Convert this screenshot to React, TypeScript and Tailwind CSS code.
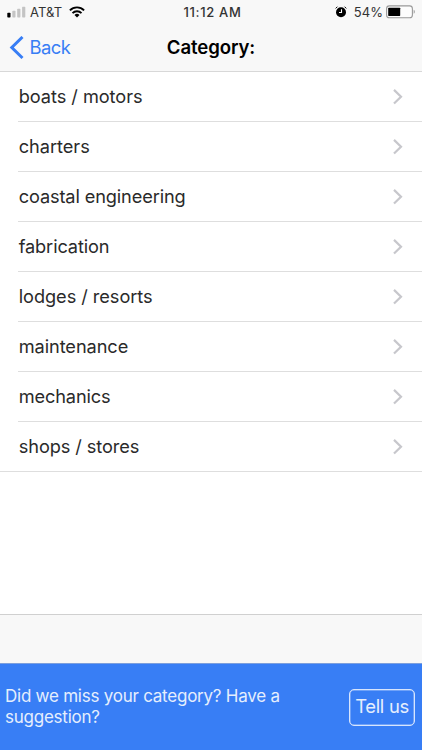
import React from 'react';

const CATEGORIES: { label: string; tracking: string }[] = [
    { label: 'boats / motors', tracking: 'tracking-[-0.05px]' },
    { label: 'charters', tracking: 'tracking-[-0.03px]' },
    { label: 'coastal engineering', tracking: 'tracking-[-0.13px]' },
    { label: 'fabrication', tracking: 'tracking-[-0.12px]' },
    { label: 'lodges / resorts', tracking: 'tracking-[-0.05px]' },
    { label: 'maintenance', tracking: 'tracking-[-0.08px]' },
    { label: 'mechanics', tracking: 'tracking-[-0.14px]' },
    { label: 'shops / stores', tracking: 'tracking-[-0.08px]' },
];

const SignalIcon: React.FC = () => (
    <svg width="19" height="12" viewBox="0 0 19 12">
        <rect x="0.3" y="6.7" width="3.2" height="4.8" rx="0.7" fill="#000" />
        <rect x="5.3" y="4.7" width="3.2" height="6.8" rx="0.7" fill="#c4c4c4" />
        <rect x="10.2" y="2.7" width="3.2" height="8.8" rx="0.7" fill="#c4c4c4" />
        <rect x="15.1" y="0.7" width="3.2" height="10.8" rx="0.7" fill="#c4c4c4" />
    </svg>
);

const WifiIcon: React.FC = () => (
    <svg width="16" height="12" viewBox="0 0 16 12" fill="none" stroke="#000" strokeWidth="1.9">
        <path d="M0.9 4.3a10 10 0 0 1 14.2 0" />
        <path d="M3.5 7.1a6.3 6.3 0 0 1 9 0" />
        <path d="M8 11.4 5.5 8.9a3.6 3.6 0 0 1 5 0Z" fill="#000" stroke="none" />
    </svg>
);

const AlarmIcon: React.FC = () => (
    <svg width="12" height="12" viewBox="0 0 12 12" fill="none">
        <circle cx="6" cy="6.2" r="5" fill="#000" />
        <path d="M0.7 2.4 2.4 0.7M11.3 2.4 9.6 0.7" stroke="#000" strokeWidth="1" />
        <path d="M6.5 3.3v3.2H4" stroke="#fff" strokeWidth="1.1" />
    </svg>
);

const BatteryIcon: React.FC = () => (
    <svg width="30" height="14" viewBox="0 0 30 14">
        <rect x="0.6" y="0.9" width="25.8" height="11.8" rx="2.8" fill="#fdfdfd" stroke="#999" strokeWidth="1.1" />
        <rect x="2.2" y="2.7" width="12" height="8.2" rx="0.6" fill="#000" />
        <path d="M27.7 4.8c1.5.7 1.5 3.3 0 4Z" fill="#999" />
    </svg>
);

const CategoryRow: React.FC<{ label: string; tracking: string; last: boolean }> = ({ label, tracking, last }) => (
    <li className={last ? 'border-b border-[#dedede]' : ''}>
        <div className={`ml-[18px] flex items-center justify-between pl-[0.7px] pr-[18px] ${last ? 'h-[49px]' : 'h-[50px] border-b border-[#dedede]'}`}>
            <span className={`pb-[2px] text-[18.2px] leading-6 text-[#2a2a2a] ${tracking}`}>{label}</span>
            <svg width="11" height="16" viewBox="0 0 11 16" fill="none" stroke="#c7c7cc" strokeWidth="2.2">
                <path d="m1 0.9 7 6.8-7 6.8" />
            </svg>
        </div>
    </li>
);

export default function App() {
    return (
        <div className="flex h-[750px] w-[422px] flex-col overflow-hidden bg-white font-['Inter',sans-serif]">
            <header className="h-[72px] shrink-0 border-b border-[#d8d8d8] bg-[#f8f8f8]">
                <div className="grid h-6 grid-cols-3 items-center whitespace-nowrap text-[13px] leading-4 text-[#333]">
                    <div className="flex items-center pl-[7px]">
                        <SignalIcon />
                        <span className="ml-1 mr-[7px] tracking-[0.1px]">AT&amp;T</span>
                        <WifiIcon />
                    </div>
                    <div className="pl-[3px] text-center font-medium tracking-[0.68px]">11:12 AM</div>
                    <div className="flex items-center justify-end pr-[6px]">
                        <AlarmIcon />
                        <span className="ml-[7px] mr-[3px] tracking-[0.1px]">54%</span>
                        <BatteryIcon />
                    </div>
                </div>
                <div className="grid h-[47px] grid-cols-3 items-center">
                    <button className="flex items-center gap-[5.5px] pl-[9px] text-[18.4px] leading-6 tracking-[-0.55px] text-[#387ef5]">
                        <svg width="15" height="24" viewBox="0 0 15 24" fill="none" stroke="#387ef5" strokeWidth="3">
                            <path d="M13.5 1 2.8 11.5 13.5 22" />
                        </svg>
                        <span className="pb-[2px]">Back</span>
                    </button>
                    <h1 className="pb-[2px] text-center text-[18.6px] font-semibold leading-6 tracking-[-0.1px] text-black">Category:</h1>
                </div>
            </header>
            <main className="flex-1 bg-white">
                <ul>
                    {CATEGORIES.map((c, i) => (
                        <CategoryRow key={c.label} label={c.label} tracking={c.tracking} last={i === CATEGORIES.length - 1} />
                    ))}
                </ul>
            </main>
            <div className="h-[49px] shrink-0 border-t border-[#d0d0d0] bg-[#f8f8f8]" />
            <footer className="flex h-[87px] shrink-0 items-center justify-between border-t border-[#7c9fdd] bg-[#387ef5] pl-[5px] pr-[7px] text-[#e5eefd]">
                <p className="w-[290px] pb-px text-[17px] leading-[21px] tracking-[-0.24px]">Did we miss your category? Have a suggestion?</p>
                <button className="h-[37px] w-[66px] whitespace-nowrap rounded-[5px] border border-[#d7e5fd] pb-[2px] text-[18.4px] leading-6 tracking-[-0.3px] shadow-[inset_0_0_0_0.5px_#a9c7fb]">Tell us</button>
            </footer>
        </div>
    );
}
